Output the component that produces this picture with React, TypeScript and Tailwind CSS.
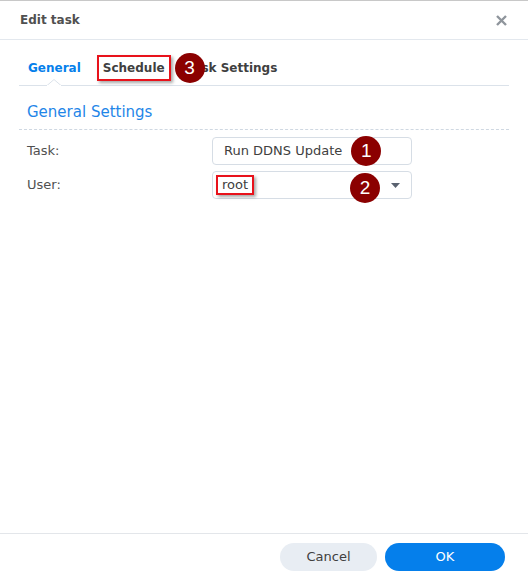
import React from 'react';

const font = { fontFamily: '"DejaVu Sans", Verdana, sans-serif' };

function Marker({ n }: { n: number }) {
  return (
    <span className="flex h-[30px] w-[30px] shrink-0 items-center justify-center rounded-full bg-[#8b0000] text-[19px] font-normal leading-none text-white [font-family:'Liberation_Sans',Arial,sans-serif]">
      {n}
    </span>
  );
}

export default function App() {
  return (
    <div
      className="flex h-[581px] w-[528px] flex-col border-t border-[#c8c8c8] bg-white text-[13px] text-[#4a4a4a]"
      style={font}
    >
      {/* Header */}
      <div className="flex h-[39px] shrink-0 items-center justify-between border-b border-[#e3e8ee] pl-[20px] pr-[21px]">
        <span className="text-[12px] font-bold text-[#505050]">Edit task</span>
        <svg width="11" height="11" viewBox="0 0 11 11" className="mt-[1px]">
          <path d="M1 1 L10 10 M10 1 L1 10" stroke="#8f959c" strokeWidth="2.4" />
        </svg>
      </div>

      {/* Tabs */}
      <div className="relative mx-[19px] mt-[14px] flex h-[32px] shrink-0 items-center border-b border-[#dbe2ea] pb-[4px] text-[12px]">
        <span className="ml-[9px] font-bold text-[#057feb]">General</span>
        <span className="ml-[16px] flex h-[26px] items-center border-2 border-[#e8121b] px-[4px] font-bold text-[#404040] shadow-[2px_2px_3px_rgba(0,0,0,0.35)]">
          Schedule
        </span>
        <span className="relative ml-[16px] flex items-center font-bold text-[#404040]">
          <span>Task Settings</span>
          <span className="absolute left-[-12px] top-1/2 -translate-y-1/2">
            <Marker n={3} />
          </span>
        </span>
        {/* notch under active tab */}
        <svg width="14" height="7" viewBox="0 0 14 7" className="absolute bottom-[-1px] left-[28px]">
          <path d="M0 6.5 L7 0.5 L14 6.5" fill="white" stroke="#dbe2ea" />
          <rect x="0" y="6" width="14" height="2" fill="white" />
        </svg>
      </div>

      {/* Section title */}
      <div className="mx-[19px] mt-[15px] border-b border-dashed border-[#cfd8e2] pb-[5px] pl-[8px]">
        <span className="text-[15px] text-[#1f86e8]">General Settings</span>
      </div>

      {/* Form */}
      <div className="mx-[27px] mt-[7px] flex flex-col gap-[6px]">
        <div className="flex items-center">
          <span className="w-[185px] text-[#505050]">Task:</span>
          <div className="flex h-[28px] w-[200px] items-center rounded-[4px] border border-[#d6dde5] pl-[11px]">
            <span className="text-[#404040]">Run DDNS Update</span>
            <span className="ml-[9px]">
              <Marker n={1} />
            </span>
          </div>
        </div>
        <div className="flex items-center">
          <span className="w-[185px] text-[#505050]">User:</span>
          <div className="relative flex h-[28px] w-[200px] items-center rounded-[4px] border border-[#d6dde5] pl-[3px]">
            <span className="flex h-[20px] items-center border-2 border-[#e8121b] px-[4px] text-[#404040] shadow-[2px_2px_3px_rgba(0,0,0,0.35)]">
              root
            </span>
            <span className="absolute left-[137px] top-[1px]">
              <Marker n={2} />
            </span>
            <svg width="9" height="5" viewBox="0 0 9 5" className="absolute right-[11px] top-[11px]">
              <path d="M0 0 L9 0 L4.5 5 Z" fill="#5a6270" />
            </svg>
          </div>
        </div>
      </div>

      <div className="flex-1" />

      {/* Footer */}
      <div className="flex h-[48px] shrink-0 items-start justify-end gap-[8px] border-t border-[#e3e6ea] pr-[23px] pt-[9px]">
        <button className="h-[28px] w-[97px] rounded-full bg-[#e8edf3] text-[13px] text-[#404040]">Cancel</button>
        <button className="h-[28px] w-[120px] rounded-full bg-[#057feb] text-[13px] text-white">OK</button>
      </div>
    </div>
  );
}
